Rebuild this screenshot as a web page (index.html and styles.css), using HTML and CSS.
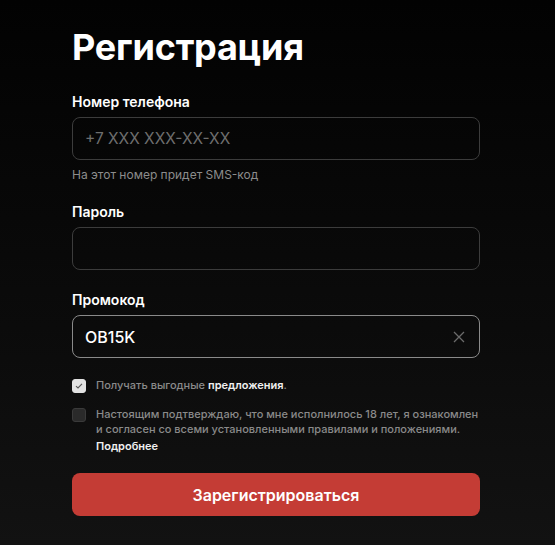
FILE: index.html
```html
<!DOCTYPE html>
<html>
<head>
	<meta charset="utf-8">
	<title>Регистрация</title>
	<link rel="stylesheet" href="styles.css">
</head>
<body>
<div class="page">
	<h1 class="title">Регистрация</h1>

	<div class="field">
		<label class="label">Номер телефона</label>
		<div class="input"><span class="placeholder">+7 XXX XXX-XX-XX</span></div>
		<p class="hint">На этот номер придет SMS-код</p>
	</div>

	<div class="field">
		<label class="label">Пароль</label>
		<div class="input"></div>
	</div>

	<div class="field">
		<label class="label">Промокод</label>
		<div class="input filled">
			<span class="value">OB15K</span>
			<svg class="clear" width="12" height="12" viewBox="0 0 12 12">
				<path d="M1 1L11 11M11 1L1 11" stroke="#6b6b6b" stroke-width="1.3" fill="none"/>
			</svg>
		</div>
	</div>

	<ul class="checks">
		<li>
			<span class="box on">
				<svg width="8" height="8" viewBox="0 0 8 8"><path d="M1 4.2L3 6L7 1.8" stroke="#555" stroke-width="1.1" fill="none"/></svg>
			</span>
			<p>Получать выгодные <b>предложения</b>.</p>
		</li>
		<li>
			<span class="box"></span>
			<div>
				<p>Настоящим подтверждаю, что мне исполнилось 18 лет, я ознакомлен и согласен со всеми установленными правилами и положениями.</p>
				<a class="more" href="javascript:void(0)">Подробнее</a>
			</div>
		</li>
	</ul>

	<a class="submit" href="javascript:void(0)">Зарегистрироваться</a>
</div>
</body>
</html>
```

FILE: styles.css
```css
* {
	padding: 0px;
	margin: 0px;
	box-sizing: border-box;
}
li {
	list-style: none;
}
html, body {
	height: 100%;
}
body {
	background: linear-gradient(180deg, #020202 0%, #0b0b0b 60%, #121212 100%);
	font-family: Inter, "Noto Sans", sans-serif;
	color: #fff;
}
.page {
	width: 408px;
	margin-left: 72px;
	padding-top: 24px;
}
.title {
	font-size: 36px;
	font-weight: 700;
	line-height: 46px;
	letter-spacing: -0.2px;
	margin-bottom: 24px;
}
.field {
	margin-bottom: 22px;
}
.label {
	display: block;
	font-size: 14px;
	font-weight: 600;
	line-height: 16px;
	margin-bottom: 7px;
}
.input {
	height: 43px;
	border: 1px solid #3c3c3c;
	border-radius: 8px;
	padding: 0 12px;
	display: flex;
	align-items: center;
	justify-content: space-between;
	font-size: 16px;
}
.input.filled {
	border-color: #8a8a8a;
}
.placeholder {
	color: #6e6e6e;
	font-size: 15.5px;
}
.value {
	color: #fff;
	font-weight: 500;
}
.clear {
	margin-right: 2px;
}
.hint {
	margin-top: 7px;
	font-size: 12px;
	line-height: 15px;
	color: #8c8c8c;
}
.checks {
	margin-top: -2px;
}
.checks li {
	display: flex;
	gap: 10px;
	margin-bottom: 14px;
	font-size: 11px;
	font-weight: 500;
	line-height: 15px;
	color: #8a8a8a;
}
.checks b {
	color: #f0f0f0;
	font-weight: 600;
}
.box {
	flex: none;
	width: 14px;
	height: 14px;
	margin-top: 1px;
	border-radius: 3px;
	background: #2a2a2a;
	border: 1px solid #3a3a3a;
	display: flex;
	align-items: center;
	justify-content: center;
}
.box.on {
	background: #e2e2e2;
	border-color: #e2e2e2;
}
.more {
	display: block;
	margin-top: 2px;
	color: #f0f0f0;
	font-weight: 600;
	text-decoration: none;
}
.submit {
	display: flex;
	align-items: center;
	justify-content: center;
	height: 43px;
	margin-top: 19px;
	border-radius: 8px;
	background: #c43c35;
	color: #fff;
	font-size: 16px;
	font-weight: 600;
	text-decoration: none;
}
```
